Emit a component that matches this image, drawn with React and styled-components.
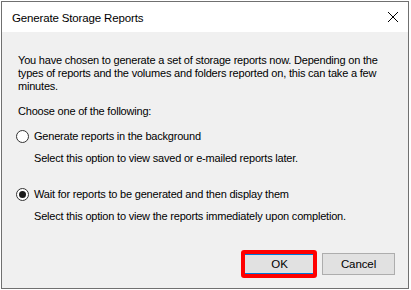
import React from "react";
import styled, { createGlobalStyle } from "styled-components";

const GlobalStyle = createGlobalStyle`
  html, body {
    margin: 0;
    padding: 0;
    background: #ffffff;
  }
  body {
    font-family: "Liberation Sans", Arial, sans-serif;
    font-size: 11px;
    letter-spacing: -0.2px;
    color: #000000;
  }
`;

const Dialog = styled.div`
  position: relative;
  margin: 1px 0 0 1px;
  width: 408px;
  height: 288px;
  box-sizing: border-box;
  border: 1px solid #707070;
  display: flex;
  flex-direction: column;
  background: #f0f0f0;
`;

const TitleBar = styled.div`
  height: 30px;
  background: #ffffff;
  display: flex;
  align-items: center;
  justify-content: space-between;
  padding: 0 9px 0 10px;
`;

const Title = styled.div`
  font-size: 11.5px;
  letter-spacing: -0.15px;
  padding-top: 1px;
`;

const CloseButton = styled.div`
  width: 12px;
  height: 12px;
  display: flex;
  align-items: center;
  justify-content: center;
`;

const Body = styled.div`
  flex: 1;
  display: flex;
  flex-direction: column;
  padding: 22px 13px 0 16px;
`;

const Paragraph = styled.p`
  margin: 0;
  line-height: 13px;
  width: 372px;
`;

const Prompt = styled.p`
  margin: 12px 0 0 0;
  line-height: 13px;
`;

const Option = styled.div`
  margin-top: ${(p) => p.$top}px;
  display: flex;
  flex-direction: column;
`;

const OptionRow = styled.label`
  display: flex;
  align-items: center;
  gap: 5px;
  line-height: 13px;
`;

const Radio = styled.span`
  width: 13px;
  height: 13px;
  box-sizing: border-box;
  border: 1px solid #333333;
  border-radius: 50%;
  background: #ffffff;
  display: flex;
  align-items: center;
  justify-content: center;
  margin-left: -2px;

  &::after {
    content: "";
    width: 7px;
    height: 7px;
    border-radius: 50%;
    background: ${(p) => (p.$checked ? "#1a1a1a" : "transparent")};
  }
`;

const Hint = styled.div`
  margin: 9px 0 0 16px;
  line-height: 13px;
`;

const Footer = styled.div`
  margin-top: auto;
  display: flex;
  justify-content: flex-end;
  gap: 6px;
  padding-bottom: 13px;
`;

const Button = styled.button`
  position: relative;
  width: 73px;
  height: 22px;
  box-sizing: border-box;
  font-family: inherit;
  font-size: 11.5px;
  letter-spacing: -0.1px;
  color: #000000;
  background: #e1e1e1;
  border: ${(p) => (p.$primary ? "2px solid #0078d7" : "1px solid #adadad")};
  padding: 0;
`;

const Highlight = styled.span`
  position: absolute;
  left: -4px;
  right: -3px;
  top: -5px;
  bottom: -5px;
  border: 4px solid #ff0000;
  border-radius: 3px;
  pointer-events: none;
`;

export default function App() {
  return (
    <>
      <GlobalStyle />
      <Dialog>
        <TitleBar>
          <Title>Generate Storage Reports</Title>
          <CloseButton>
            <svg width="12" height="12" viewBox="0 0 12 12">
              <path d="M1 1 L11 11 M11 1 L1 11" stroke="#000" strokeWidth="1" />
            </svg>
          </CloseButton>
        </TitleBar>
        <Body>
          <Paragraph>
            You have chosen to generate a set of storage reports now. Depending on the
            types of reports and the volumes and folders reported on, this can take a few
            minutes.
          </Paragraph>
          <Prompt>Choose one of the following:</Prompt>
          <Option $top={12}>
            <OptionRow>
              <Radio />
              Generate reports in the background
            </OptionRow>
            <Hint>Select this option to view saved or e-mailed reports later.</Hint>
          </Option>
          <Option $top={23}>
            <OptionRow>
              <Radio $checked />
              Wait for reports to be generated and then display them
            </OptionRow>
            <Hint>Select this option to view the reports immediately upon completion.</Hint>
          </Option>
          <Footer>
            <Button $primary>
              OK
              <Highlight />
            </Button>
            <Button>Cancel</Button>
          </Footer>
        </Body>
      </Dialog>
    </>
  );
}
